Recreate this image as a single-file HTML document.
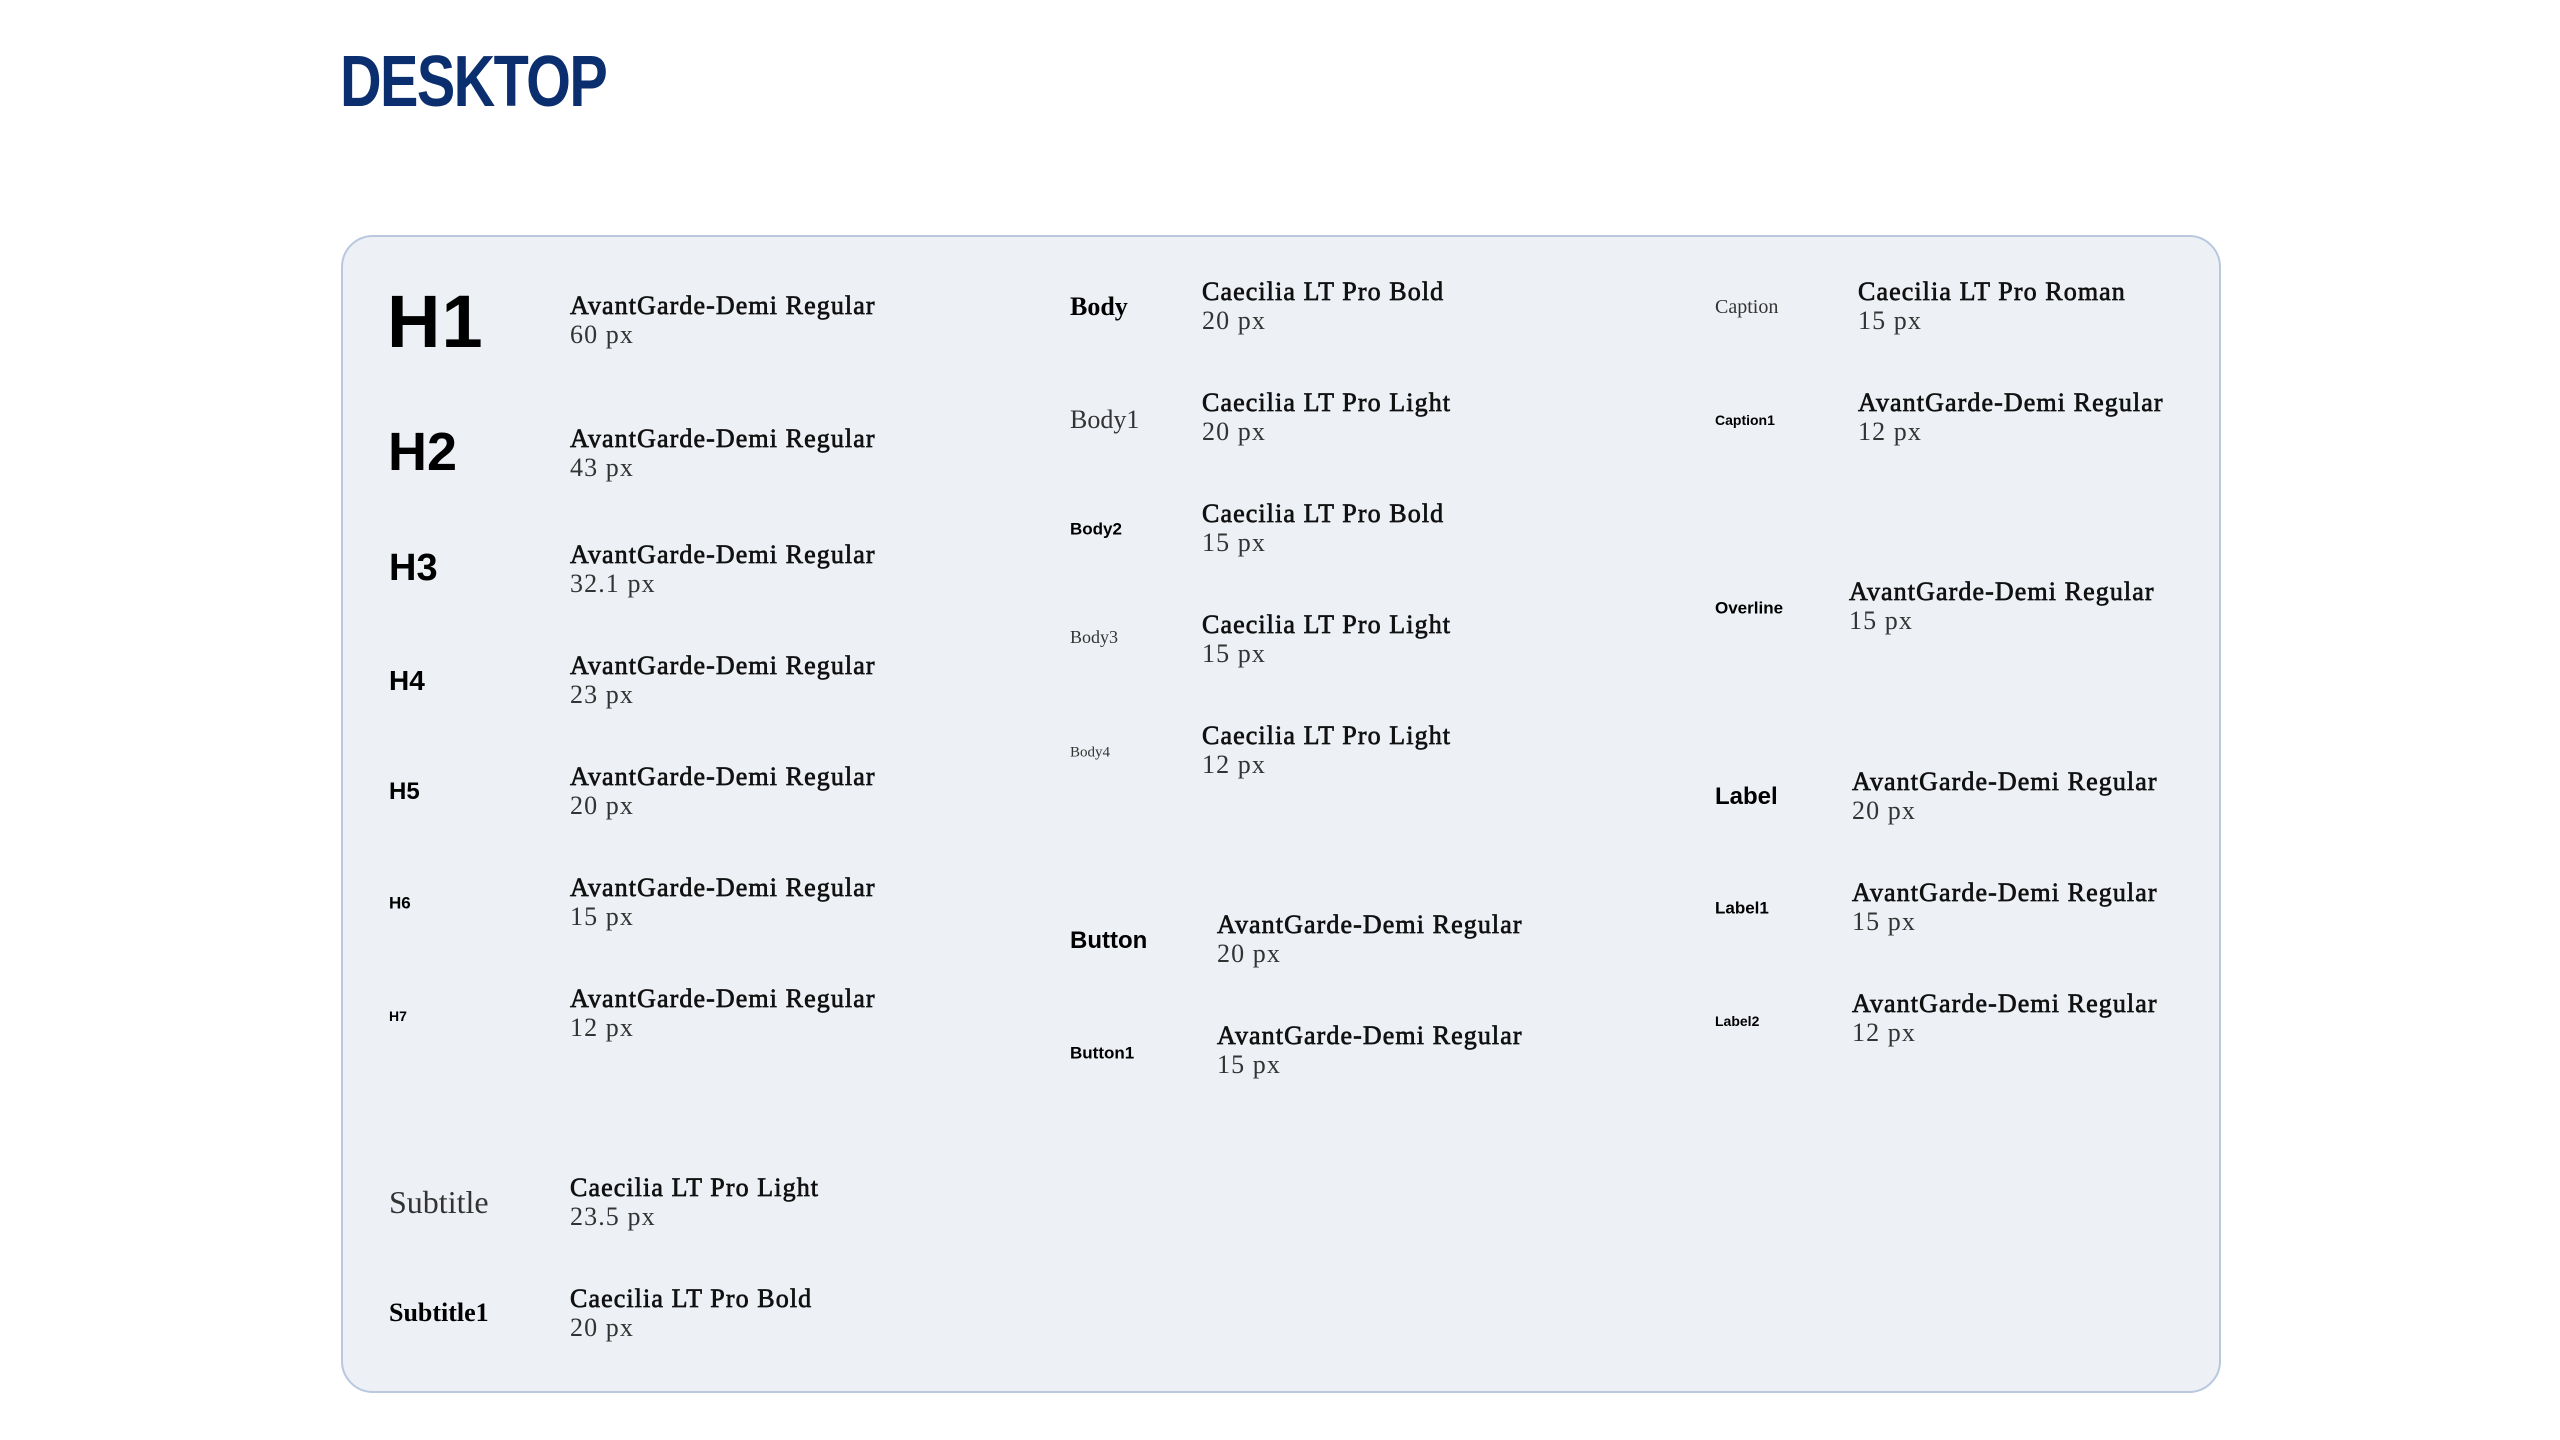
<!DOCTYPE html>
<html><head><meta charset="utf-8"><style>
html,body{margin:0;padding:0;background:#fff;width:2560px;height:1440px;overflow:hidden;position:relative}
.t{position:absolute;left:340px;top:46px;font:bold 72px "Liberation Sans",sans-serif;color:#0b2f6e;letter-spacing:-2px;line-height:72px;transform:scaleX(0.8);transform-origin:0 0}
.card{position:absolute;left:341px;top:235px;width:1876px;height:1154px;background:#edf0f5;border:2px solid #b9c8df;border-radius:32px}
.l{position:absolute;transform:translateY(-50%);white-space:nowrap;color:#000;line-height:1}
.s{font-family:"Liberation Sans",sans-serif;font-weight:bold}
.f{font-family:"Liberation Serif",serif}
.d{position:absolute;font:26px/29px "Liberation Serif",serif;color:#111;white-space:nowrap;letter-spacing:1.1px}
.d b{font-weight:normal;-webkit-text-stroke:0.7px #111;display:block}
.d i{font-style:normal;color:#333;display:block}
</style></head><body>
<div class="t">DESKTOP</div>
<div class="card"></div>

<div class="l s" style="left:387px;top:322px;font-size:74px;letter-spacing:1px">H1</div>
<div class="l s" style="left:388px;top:452px;font-size:54px">H2</div>
<div class="l s" style="left:389px;top:568px;font-size:38px">H3</div>
<div class="l s" style="left:389px;top:681px;font-size:28px">H4</div>
<div class="l s" style="left:389px;top:792px;font-size:24px">H5</div>
<div class="l s" style="left:389px;top:903px;font-size:17px">H6</div>
<div class="l s" style="left:389px;top:1016px;font-size:14px">H7</div>
<div class="l f" style="left:389px;top:1202px;font-size:32px;color:#333">Subtitle</div>
<div class="l f" style="left:389px;top:1313px;font-size:26px;font-weight:bold">Subtitle1</div>

<div class="d" style="left:570px;top:291px"><b>AvantGarde-Demi Regular</b><i>60 px</i></div>
<div class="d" style="left:570px;top:424px"><b>AvantGarde-Demi Regular</b><i>43 px</i></div>
<div class="d" style="left:570px;top:540px"><b>AvantGarde-Demi Regular</b><i>32.1 px</i></div>
<div class="d" style="left:570px;top:651px"><b>AvantGarde-Demi Regular</b><i>23 px</i></div>
<div class="d" style="left:570px;top:762px"><b>AvantGarde-Demi Regular</b><i>20 px</i></div>
<div class="d" style="left:570px;top:873px"><b>AvantGarde-Demi Regular</b><i>15 px</i></div>
<div class="d" style="left:570px;top:984px"><b>AvantGarde-Demi Regular</b><i>12 px</i></div>
<div class="d" style="left:570px;top:1173px"><b>Caecilia LT Pro Light</b><i>23.5 px</i></div>
<div class="d" style="left:570px;top:1284px"><b>Caecilia LT Pro Bold</b><i>20 px</i></div>

<div class="l f" style="left:1070px;top:307px;font-size:26px;font-weight:bold">Body</div>
<div class="l f" style="left:1070px;top:420px;font-size:26px;color:#333">Body1</div>
<div class="l s" style="left:1070px;top:529px;font-size:17px">Body2</div>
<div class="l f" style="left:1070px;top:637px;font-size:18px;color:#333">Body3</div>
<div class="l f" style="left:1070px;top:753px;font-size:15px;color:#333">Body4</div>
<div class="l s" style="left:1070px;top:941px;font-size:24px">Button</div>
<div class="l s" style="left:1070px;top:1053px;font-size:17px">Button1</div>

<div class="d" style="left:1202px;top:277px"><b>Caecilia LT Pro Bold</b><i>20 px</i></div>
<div class="d" style="left:1202px;top:388px"><b>Caecilia LT Pro Light</b><i>20 px</i></div>
<div class="d" style="left:1202px;top:499px"><b>Caecilia LT Pro Bold</b><i>15 px</i></div>
<div class="d" style="left:1202px;top:610px"><b>Caecilia LT Pro Light</b><i>15 px</i></div>
<div class="d" style="left:1202px;top:721px"><b>Caecilia LT Pro Light</b><i>12 px</i></div>
<div class="d" style="left:1217px;top:910px"><b>AvantGarde-Demi Regular</b><i>20 px</i></div>
<div class="d" style="left:1217px;top:1021px"><b>AvantGarde-Demi Regular</b><i>15 px</i></div>

<div class="l f" style="left:1715px;top:307px;font-size:20px;color:#333">Caption</div>
<div class="l s" style="left:1715px;top:420px;font-size:14px">Caption1</div>
<div class="l s" style="left:1715px;top:608px;font-size:17px">Overline</div>
<div class="l s" style="left:1715px;top:797px;font-size:24px">Label</div>
<div class="l s" style="left:1715px;top:908px;font-size:17px">Label1</div>
<div class="l s" style="left:1715px;top:1021px;font-size:14px">Label2</div>

<div class="d" style="left:1858px;top:277px"><b>Caecilia LT Pro Roman</b><i>15 px</i></div>
<div class="d" style="left:1858px;top:388px"><b>AvantGarde-Demi Regular</b><i>12 px</i></div>
<div class="d" style="left:1849px;top:577px"><b>AvantGarde-Demi Regular</b><i>15 px</i></div>
<div class="d" style="left:1852px;top:767px"><b>AvantGarde-Demi Regular</b><i>20 px</i></div>
<div class="d" style="left:1852px;top:878px"><b>AvantGarde-Demi Regular</b><i>15 px</i></div>
<div class="d" style="left:1852px;top:989px"><b>AvantGarde-Demi Regular</b><i>12 px</i></div>
</body></html>
